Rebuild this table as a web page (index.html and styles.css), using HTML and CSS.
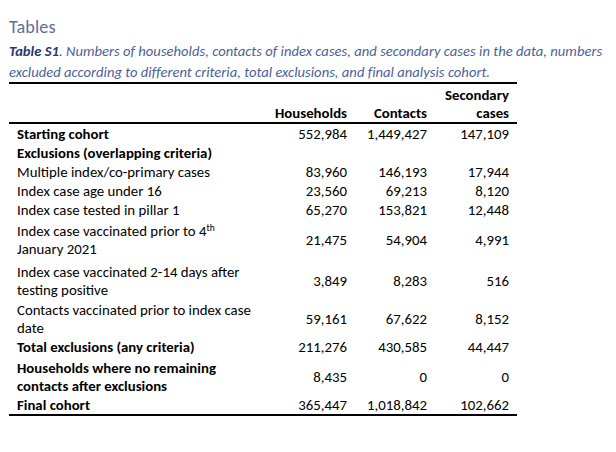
FILE: index.html
```html
<!DOCTYPE html>
<html>
<head>
<meta charset="utf-8">
<link rel="stylesheet" href="styles.css">
</head>
<body>
<div class="page">
  <h1 class="heading">Tables</h1>
  <p class="caption"><span class="caption-label">Table S1</span>. Numbers of households, contacts of index cases, and secondary cases in the data, numbers<br>excluded according to different criteria, total exclusions, and final analysis cohort.</p>
  <table class="data">
    <colgroup>
      <col class="c-label">
      <col class="c-hh">
      <col class="c-ct">
      <col class="c-sc">
    </colgroup>
    <thead>
      <tr>
        <th class="label"></th>
        <th class="num">Households</th>
        <th class="num">Contacts</th>
        <th class="num">Secondary<br>cases</th>
      </tr>
    </thead>
    <tbody>
      <tr class="r1"><td class="label b">Starting cohort</td><td class="num">552,984</td><td class="num">1,449,427</td><td class="num">147,109</td></tr>
      <tr class="r1"><td class="label b">Exclusions (overlapping criteria)</td><td class="num"></td><td class="num"></td><td class="num"></td></tr>
      <tr class="r1"><td class="label">Multiple index/co-primary cases</td><td class="num">83,960</td><td class="num">146,193</td><td class="num">17,944</td></tr>
      <tr class="r1"><td class="label">Index case age under 16</td><td class="num">23,560</td><td class="num">69,213</td><td class="num">8,120</td></tr>
      <tr class="r1"><td class="label">Index case tested in pillar 1</td><td class="num">65,270</td><td class="num">153,821</td><td class="num">12,448</td></tr>
      <tr class="r2 ra"><td class="label">Index case vaccinated prior to 4<sup>th</sup><br>January 2021</td><td class="num">21,475</td><td class="num">54,904</td><td class="num">4,991</td></tr>
      <tr class="r2 rb"><td class="label">Index case vaccinated 2-14 days after<br>testing positive</td><td class="num">3,849</td><td class="num">8,283</td><td class="num">516</td></tr>
      <tr class="r2 rc"><td class="label">Contacts vaccinated prior to index case<br>date</td><td class="num">59,161</td><td class="num">67,622</td><td class="num">8,152</td></tr>
      <tr class="r1"><td class="label b">Total exclusions (any criteria)</td><td class="num">211,276</td><td class="num">430,585</td><td class="num">44,447</td></tr>
      <tr class="r2 rd"><td class="label b">Households where no remaining<br>contacts after exclusions</td><td class="num">8,435</td><td class="num">0</td><td class="num">0</td></tr>
      <tr class="r1 last"><td class="label b">Final cohort</td><td class="num">365,447</td><td class="num">1,018,842</td><td class="num">102,662</td></tr>
    </tbody>
  </table>
</div>
</body>
</html>
```

FILE: styles.css
```css
html, body {
  margin: 0;
  padding: 0;
  background: #ffffff;
}

.page {
  padding: 16px 0 0 9px;
  font-family: Carlito, Calibri, Lato, "Liberation Sans", sans-serif;
  color: #000000;
}

.heading {
  margin: 0;
  font-size: 18.2px;
  font-weight: normal;
  line-height: 22px;
  color: #5a6fa0;
  letter-spacing: 0.1px;
}

.caption {
  margin: 3px 0 0 0;
  font-size: 14.6px;
  font-style: italic;
  line-height: 20.5px;
  color: #4a5f9a;
  white-space: nowrap;
  letter-spacing: 0.02px;
}

.caption-label {
  font-weight: bold;
  color: #1f3a70;
}

.data {
  margin-top: 0;
  width: 508px;
  border-collapse: collapse;
  table-layout: fixed;
  font-size: 14.8px;
  line-height: 18px;
  border-top: 2px solid #000;
  border-bottom: 2px solid #000;
}

.c-label { width: 253px; }
.c-hh { width: 93px; }
.c-ct { width: 80px; }
.c-sc { width: 82px; }

.data th {
  font-weight: bold;
  vertical-align: bottom;
  padding: 2px 8px 0 0;
  border-bottom: 2px solid #000;
}

.data td {
  padding: 0.5px 8px 0.5px 0;
  vertical-align: middle;
  white-space: nowrap;
}

.data .label {
  text-align: left;
  padding-left: 8px;
}

.data .num {
  text-align: right;
}

.data .b {
  font-weight: bold;
}

.data sup {
  font-size: 9.5px;
  line-height: 0;
  vertical-align: 5px;
}

.data tr.ra td { padding-top: 2.5px; padding-bottom: 3px; }
.data tr.rb td { padding-top: 2px; padding-bottom: 1px; }
.data tr.rc td { padding-top: 1px; padding-bottom: 0.5px; }
.data tr.rd td { padding-top: 2.5px; padding-bottom: 0.5px; }
.data tr.last td { padding-bottom: 0; }
```
